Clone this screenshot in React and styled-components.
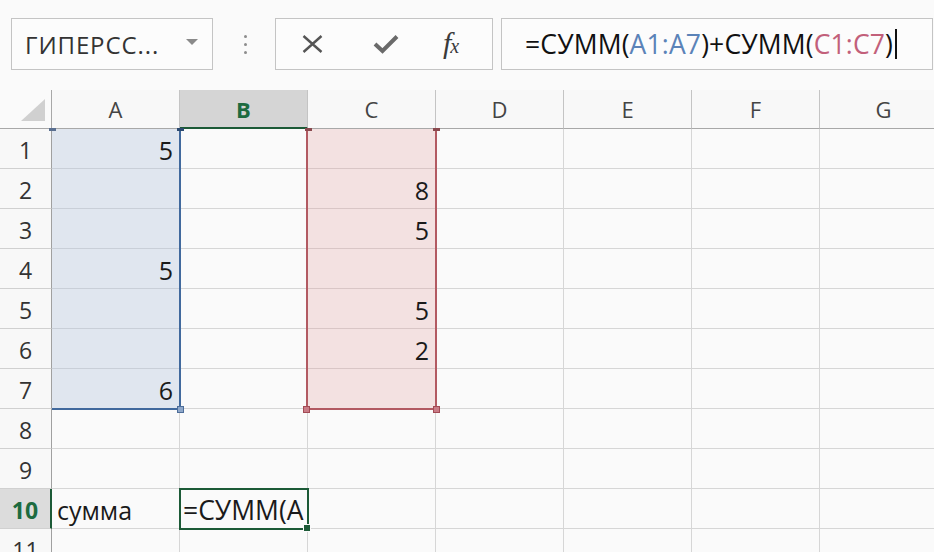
import React from "react";
import styled, { createGlobalStyle } from "styled-components";

const Global = createGlobalStyle`
  html, body { margin: 0; padding: 0; background: #fafafa; overflow: hidden; }
  body { font-family: "Open Sans", "Noto Sans", sans-serif; color: #222; }
  * { box-sizing: border-box; }
`;

const Page = styled.div`
  width: 934px;
  height: 552px;
  overflow: hidden;
  background: #fafafa;
`;

const Toolbar = styled.div`
  height: 90px;
  display: flex;
  align-items: flex-start;
  padding: 18px 1px 0 11px;
`;

const Box = styled.div`
  height: 52px;
  border: 1px solid #c4c4c4;
  background: #fcfcfc;
  display: flex;
  align-items: center;
`;

const NameBox = styled(Box)`
  width: 202px;
  padding: 0 14px 0 13px;
  justify-content: space-between;
  font-size: 24px;
  color: #333;
  letter-spacing: 0.9px;
`;

const Caret = styled.span`
  width: 0;
  height: 0;
  border-left: 6px solid transparent;
  border-right: 6px solid transparent;
  border-top: 6px solid #8a8a8a;
  margin-top: -4px;
`;

const Dots = styled.div`
  width: 62px;
  height: 52px;
  display: flex;
  flex-direction: column;
  align-items: center;
  justify-content: center;
  gap: 5px;
  padding-left: 2px;
  & > span {
    width: 3px;
    height: 3px;
    border-radius: 50%;
    background: #8c8c8c;
  }
`;

const IconBox = styled(Box)`
  width: 218px;
  padding-left: 26px;
  gap: 0;
`;

const IconSlot = styled.span`
  display: flex;
  align-items: center;
  margin-right: ${(p) => p.$gap || 0}px;
`;

const Fx = styled.span`
  font-family: "Liberation Serif", "DejaVu Serif", serif;
  font-style: italic;
  font-size: 30px;
  color: #3a3a3a;
  letter-spacing: -1px;
  line-height: 1;
  margin-top: -2px;
  & > small { font-size: 20px; }
`;

const FormulaBox = styled(Box)`
  flex: 1;
  margin-left: 8px;
  padding-left: 23px;
  font-size: 26.5px;
  letter-spacing: 0.15px;
  color: #111;
  white-space: nowrap;
`;

const Ref = styled.span`
  color: ${(p) => p.$c};
`;

const Cursor = styled.span`
  display: inline-block;
  width: 2px;
  height: 30px;
  background: #111;
  margin-left: 2px;
  vertical-align: middle;
`;

const GridWrap = styled.div`
  position: relative;
`;

const Grid = styled.div`
  display: grid;
  grid-template-columns: 52px repeat(7, 128px);
  grid-template-rows: 39px repeat(11, 40px);
`;

const Corner = styled.div`
  border-right: 1px solid #a8a8a8;
  border-bottom: 1px solid #a8a8a8;
  display: flex;
  align-items: flex-end;
  justify-content: flex-end;
  padding: 0 6px 7px 0;
`;

const SelectAll = styled.div`
  width: 0;
  height: 0;
  border-left: 24px solid transparent;
  border-bottom: 22px solid #d0d0d0;
`;

const ColHead = styled.div`
  display: flex;
  align-items: center;
  justify-content: center;
  font-size: 22px;
  color: ${(p) => (p.$active ? "#1d6b40" : "#444")};
  font-weight: ${(p) => (p.$active ? 700 : 400)};
  background: ${(p) => (p.$active ? "#d5d5d5" : "#f8f8f8")};
  border-right: 1px solid #c4c4c4;
  border-bottom: ${(p) => (p.$active ? "2px solid #1c5a37" : "1px solid #a8a8a8")};
  padding-top: ${(p) => (p.$active ? "1px" : "0")};
`;

const RowHead = styled.div`
  display: flex;
  align-items: center;
  justify-content: center;
  font-size: 23px;
  color: ${(p) => (p.$active ? "#1d6b40" : "#333")};
  font-weight: ${(p) => (p.$active ? 700 : 400)};
  background: ${(p) => (p.$active ? "#dcdcdc" : "#f8f8f8")};
  border-right: ${(p) => (p.$active ? "2px solid #1c5a37" : "1px solid #a0a0a0")};
  border-bottom: 1px solid #d0d0d0;
  padding-top: 2px;
`;

const Cell = styled.div`
  position: relative;
  display: flex;
  align-items: center;
  justify-content: ${(p) => (p.$num ? "flex-end" : "flex-start")};
  padding: 3px ${(p) => (p.$num ? "6px" : "0")} 0 ${(p) => (p.$num ? "0" : "5px")};
  font-size: 25px;
  color: #1a1a1a;
  background: ${(p) => p.$fill || "#fafafa"};
  border-right: 1px solid #d6d6d6;
  border-bottom: 1px solid ${(p) => p.$line || "#d6d6d6"};
  white-space: nowrap;
  ${(p) =>
    p.$active &&
    `outline: 2px solid #1c5a37; outline-offset: -1px; z-index: 2; font-size: 26.5px; padding-left: 3px;`}
`;

const Clip = styled.span`
  display: block;
  overflow: hidden;
  width: 100%;
`;

const Handle = styled.span`
  position: absolute;
  right: -4px;
  bottom: -4px;
  width: 6px;
  height: 6px;
  background: #1c5a37;
  border: 1px solid #fafafa;
  box-sizing: content-box;
`;

const RangeBox = styled.div`
  position: absolute;
  pointer-events: none;
  z-index: 1;
  border-right: 2px solid ${(p) => p.$c};
  border-bottom: 2px solid ${(p) => p.$c};
  border-left: ${(p) => (p.$left ? `2px solid ${p.$c}` : "none")};
`;

const Knob = styled.span`
  position: absolute;
  width: 7px;
  height: 7px;
  background: ${(p) => p.$fill};
  border: 1px solid ${(p) => p.$c};
  bottom: -5px;
  ${(p) => (p.$side === "left" ? "left: -5px;" : "right: -5px;")}
`;

const Tick = styled.span`
  position: absolute;
  top: -1px;
  width: 7px;
  height: 3px;
  background: ${(p) => p.$c};
  ${(p) => (p.$side === "left" ? "left: -3px;" : "right: -5px;")}
`;

const cols = ["A", "B", "C", "D", "E", "F", "G"];
const data = {
  A1: 5, A4: 5, A7: 6, A10: "сумма",
  C2: 8, C3: 5, C5: 5, C6: 2,
};

const BLUE = "#41699d";
const RED = "#b25a62";

function CellFor({ col, row }) {
  const key = col + row;
  const inBlue = col === "A" && row <= 7;
  const inRed = col === "C" && row <= 7;
  const fill = inBlue ? "#e0e6ef" : inRed ? "#f3e1e1" : undefined;
  const line = inBlue ? "#c9cfd8" : inRed ? "#d9c6c6" : undefined;
  if (key === "B10") {
    return (
      <Cell $active>
        <Clip>=СУММ(А</Clip>
        <Handle />
      </Cell>
    );
  }
  const v = data[key];
  return (
    <Cell $fill={fill} $line={line} $num={typeof v === "number"}>
      {v}
    </Cell>
  );
}

export default function App() {
  const rows = Array.from({ length: 11 }, (_, i) => i + 1);
  return (
    <Page>
      <Global />
      <Toolbar>
        <NameBox>
          <span>ГИПЕРСС...</span>
          <Caret />
        </NameBox>
        <Dots>
          <span />
          <span />
          <span />
        </Dots>
        <IconBox>
          <IconSlot $gap={50}>
            <svg width="21" height="18" viewBox="0 0 21 18">
              <path d="M1.5 1 L19.5 17 M19.5 1 L1.5 17" stroke="#555" strokeWidth="2.4" fill="none" />
            </svg>
          </IconSlot>
          <IconSlot $gap={44}>
            <svg width="26" height="20" viewBox="0 0 26 20">
              <path d="M2 10 L9.5 17 L24 2.5" stroke="#6a6a6a" strokeWidth="4" fill="none" />
            </svg>
          </IconSlot>
          <Fx>
            f<small>x</small>
          </Fx>
        </IconBox>
        <FormulaBox>
          =СУММ(<Ref $c="#5b83b8">А1:А7</Ref>)+СУММ(<Ref $c="#c2607a">С1:С7</Ref>)
          <Cursor />
        </FormulaBox>
      </Toolbar>
      <GridWrap>
        <Grid>
          <Corner>
            <SelectAll />
          </Corner>
          {cols.map((c) => (
            <ColHead key={c} $active={c === "B"}>
              {c}
            </ColHead>
          ))}
          {rows.map((r) => (
            <React.Fragment key={r}>
              <RowHead $active={r === 10}>{r}</RowHead>
              {cols.map((c) => (
                <CellFor key={c + r} col={c} row={r} />
              ))}
            </React.Fragment>
          ))}
        </Grid>
        <RangeBox $c={BLUE} style={{ left: 52, top: 39, width: 129, height: 281 }}>
          <Tick $c="#5a6f90" $side="left" />
          <Tick $c="#2c4a70" $side="right" />
          <Knob $c="#4d6d99" $fill="#8ea7c9" $side="right" />
        </RangeBox>
        <RangeBox $left $c={RED} style={{ left: 306, top: 39, width: 131, height: 281 }}>
          <Tick $c="#8a4a4f" $side="left" />
          <Tick $c="#8a4a4f" $side="right" />
          <Knob $c="#a24b55" $fill="#c97b86" $side="left" />
          <Knob $c="#a24b55" $fill="#c97b86" $side="right" />
        </RangeBox>
      </GridWrap>
    </Page>
  );
}
